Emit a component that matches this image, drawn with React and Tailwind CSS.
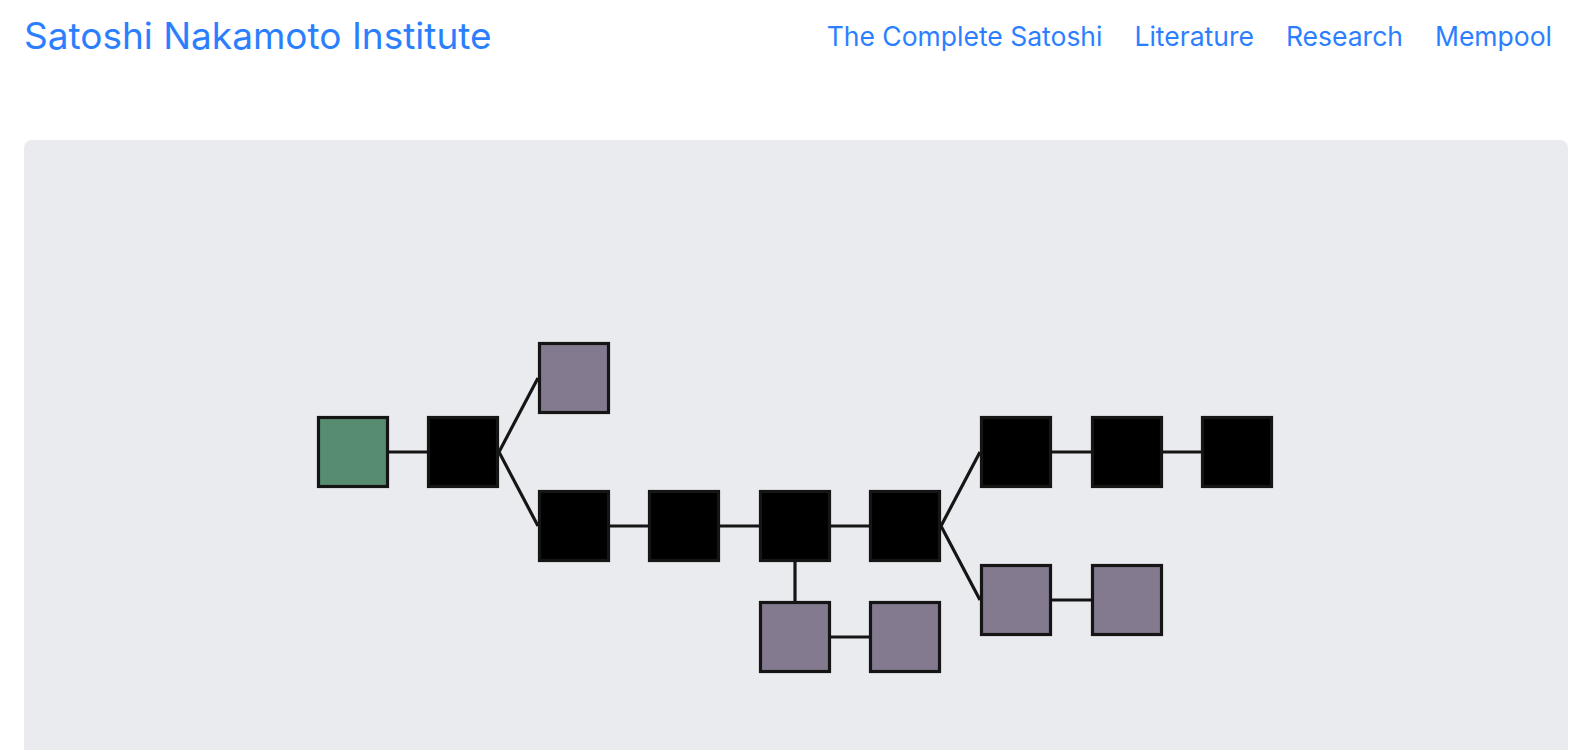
import React from 'react';

const S = 72;

// blocks of the chain diagram: [left, top, kind]
const blocks = [
  [317, 416, 'genesis'],
  [427, 416, 'main'],
  [538, 342, 'orphan'],
  [538, 490, 'main'],
  [648, 490, 'main'],
  [759, 490, 'main'],
  [869, 490, 'main'],
  [759, 601, 'orphan'],
  [869, 601, 'orphan'],
  [980, 416, 'main'],
  [1091, 416, 'main'],
  [1201, 416, 'main'],
  [980, 564, 'orphan'],
  [1091, 564, 'orphan'],
];

const links = [
  [389, 452, 427, 452],
  [499, 452, 538, 378],
  [499, 452, 538, 526],
  [610, 526, 648, 526],
  [720, 526, 759, 526],
  [831, 526, 869, 526],
  [795, 562, 795, 601],
  [831, 637, 869, 637],
  [941, 526, 980, 452],
  [941, 526, 980, 600],
  [1052, 452, 1091, 452],
  [1163, 452, 1201, 452],
  [1052, 600, 1091, 600],
];

const fills = { genesis: '#578c70', main: '#000000', orphan: '#847a8f' };

function ChainDiagram() {
  return (
    <svg width="962" height="336" viewBox="315 339 962 336">
      {links.map(([x1, y1, x2, y2], i) => (
        <line key={i} x1={x1} y1={y1} x2={x2} y2={y2} stroke="#151515" strokeWidth="3.2" />
      ))}
      {blocks.map(([x, y, kind], i) => (
        <rect
          key={i}
          x={x + 1.5}
          y={y + 1.5}
          width={S - 3}
          height={S - 3}
          fill={fills[kind]}
          stroke="#151515"
          strokeWidth="3.2"
        />
      ))}
    </svg>
  );
}

export default function App() {
  const nav = ['The Complete Satoshi', 'Literature', 'Research', 'Mempool'];
  return (
    <div className="min-h-screen bg-white font-['Inter',sans-serif]">
      <header className="flex items-center justify-between pl-6 pr-5 pt-4">
        <a href="#" className="text-[37px] leading-10 text-blue-500">Satoshi Nakamoto Institute</a>
        <nav className="flex">
          {nav.map(item => (
            <a key={item} href="#" className="px-4 text-[26.5px] leading-8 text-blue-500">{item}</a>
          ))}
        </nav>
      </header>

      <main className="mt-[84px] ml-6 mr-5">
        <div className="h-[700px] rounded-lg bg-[#eaebef]">
          <div className="flex justify-center pt-[199px]">
            <ChainDiagram />
          </div>
        </div>
      </main>
    </div>
  );
}
